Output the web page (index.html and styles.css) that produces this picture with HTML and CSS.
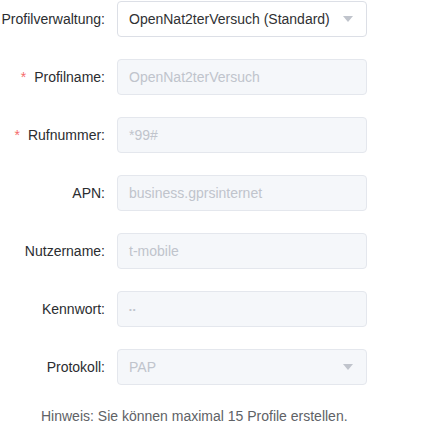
FILE: index.html
```html
<!DOCTYPE html>
<html>
<head>
<meta charset="utf-8">
<link rel="stylesheet" href="styles.css">
</head>
<body>
<div class="form">
  <div class="row">
    <label class="label">Profilverwaltung:</label>
    <div class="box select"><span class="value">OpenNat2terVersuch (Standard)</span><span class="caret"></span></div>
  </div>
  <div class="row">
    <label class="label"><span class="req">*</span>Profilname:</label>
    <div class="box disabled"><span class="ph">OpenNat2terVersuch</span></div>
  </div>
  <div class="row">
    <label class="label"><span class="req">*</span>Rufnummer:</label>
    <div class="box disabled"><span class="ph">*99#</span></div>
  </div>
  <div class="row">
    <label class="label">APN:</label>
    <div class="box disabled"><span class="ph">business.gprsinternet</span></div>
  </div>
  <div class="row">
    <label class="label">Nutzername:</label>
    <div class="box disabled"><span class="ph">t-mobile</span></div>
  </div>
  <div class="row">
    <label class="label">Kennwort:</label>
    <div class="box disabled"><span class="ph pw">••</span></div>
  </div>
  <div class="row">
    <label class="label">Protokoll:</label>
    <div class="box disabled select"><span class="ph">PAP</span><span class="caret"></span></div>
  </div>
  <p class="hint">Hinweis: Sie können maximal 15 Profile erstellen.</p>
</div>
</body>
</html>
```
FILE: styles.css
```css
html, body {
  margin: 0;
  padding: 0;
  background: #ffffff;
}
body {
  font-family: "Liberation Sans", Arial, sans-serif;
  font-size: 14px;
  color: #303133;
}
.form {
  padding-top: 1px;
  display: flex;
  flex-direction: column;
  gap: 22px;
}
.row {
  display: grid;
  grid-template-columns: 117px 250px;
  align-items: center;
}
.label {
  text-align: right;
  padding-right: 12px;
  color: #2b2d30;
  white-space: nowrap;
}
.req {
  color: #f56c6c;
  margin-right: 8px;
}
.box {
  box-sizing: border-box;
  height: 36px;
  border: 1px solid #dcdfe6;
  border-radius: 4px;
  background: #ffffff;
  display: flex;
  align-items: center;
  padding: 0 11px;
}
.box.disabled {
  background: #f5f7fa;
  border-color: #e4e7ed;
}
.value {
  color: #303133;
  flex: 1;
}
.ph {
  color: #c0c4cc;
  flex: 1;
}
.pw {
  font-size: 8px;
  letter-spacing: 1px;
}
.caret {
  width: 0;
  height: 0;
  border-left: 5px solid transparent;
  border-right: 5px solid transparent;
  border-top: 6px solid #c0c4cc;
  margin-right: 2px;
}
.hint {
  margin: 1px 0 0;
  padding-left: 41px;
  color: #606266;
}
```
